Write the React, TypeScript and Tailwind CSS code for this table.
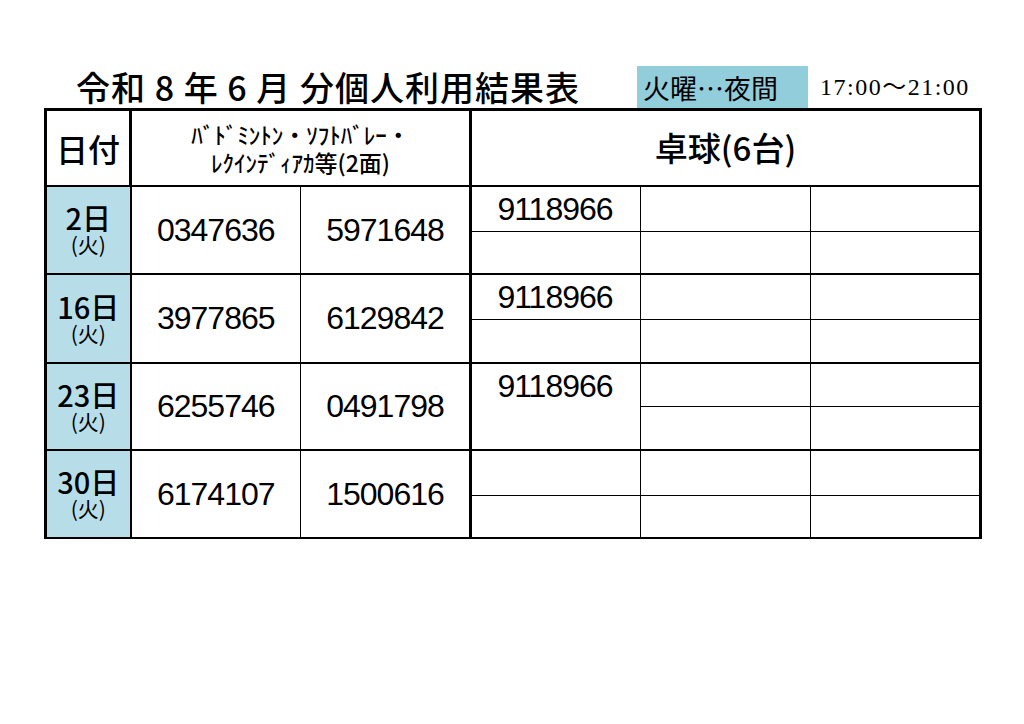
import React from "react";

type Row = {
  day: string;
  a: string;
  b: string;
  tt: string;
  merged: boolean;
};

const ROWS: Row[] = [
  { day: "2", a: "0347636", b: "5971648", tt: "9118966", merged: false },
  { day: "16", a: "3977865", b: "6129842", tt: "9118966", merged: false },
  { day: "23", a: "6255746", b: "0491798", tt: "9118966", merged: true },
  { day: "30", a: "6174107", b: "1500616", tt: "", merged: false },
];

const gothic = "font-['Noto_Sans_CJK_JP',sans-serif]";
const num = "font-['Liberation_Sans',Arial,sans-serif] text-[32px] tracking-[-1px] leading-none text-black";

export default function App() {
  return (
    <div className={`w-[1024px] h-[724px] bg-white pt-[66px] pl-[44px] ${gothic} text-black`}>
      <div className="flex items-stretch h-[42px]">
        <div className="w-[593px] pl-[32px] flex items-center">
          <span className="text-[34px] font-medium leading-none tracking-[1px]">
            令和 8 年 6 月 分個人利用結果表
          </span>
        </div>
        <div className="w-[171px] bg-[#92CDDC] flex items-center pl-[6px]">
          <span className="text-[27px] leading-none">火曜…夜間</span>
        </div>
        <div className="flex items-center pl-[12px]">
          <span className="font-['Liberation_Serif','Noto_Sans_CJK_JP',serif] text-[24px] leading-none tracking-[1.5px]">
            17:00～21:00
          </span>
        </div>
      </div>

      <table className="border-collapse table-fixed w-[935px]">
        <colgroup>
          <col className="w-[85px]" />
          <col className="w-[170px]" />
          <col className="w-[170px]" />
          <col className="w-[170px]" />
          <col className="w-[170px]" />
          <col className="w-[170px]" />
        </colgroup>
        <thead>
          <tr>
            <th className="h-[76px] border-[3px] border-r-2 border-b-2 border-black font-medium text-[32px] leading-none">
              日付
            </th>
            <th
              colSpan={2}
              className="border-[3px] border-b-2 border-black font-medium text-[23px] leading-[28px]"
            >
              <div>ﾊﾞﾄﾞﾐﾝﾄﾝ・ｿﾌﾄﾊﾞﾚｰ・</div>
              <div>ﾚｸｲﾝﾃﾞｨｱｶ等(2面)</div>
            </th>
            <th colSpan={3} className="border-[3px] border-b-2 border-black font-medium text-[33px] leading-none">
              卓球(6台)
            </th>
          </tr>
        </thead>
        <tbody>
          {ROWS.map((r) => (
            <React.Fragment key={r.day}>
              <tr>
                <td
                  rowSpan={2}
                  className="border-l-[3px] border-r-2 border-t-2 border-b-2 border-black bg-[#B7DEE8] text-center align-middle"
                >
                  <div className="text-[29px] font-medium leading-[30px]">{r.day}日</div>
                  <div className="text-[21px] leading-[25px]">(火)</div>
                </td>
                <td rowSpan={2} className="border border-t-2 border-b-2 border-black text-center">
                  <span className={num}>{r.a}</span>
                </td>
                <td rowSpan={2} className="border border-t-2 border-b-2 border-r-[3px] border-black text-center">
                  <span className={num}>{r.b}</span>
                </td>
                <td
                  rowSpan={r.merged ? 2 : 1}
                  className={`border border-t-2 border-black align-top p-0 ${r.merged ? "border-b-2" : ""}`}
                >
                  <div className="h-[44px] flex items-center justify-center pr-[2px]">
                    <span className={num}>{r.tt}</span>
                  </div>
                </td>
                <td className="border border-t-2 border-black h-[44px]" />
                <td className="border border-t-2 border-r-[3px] border-black" />
              </tr>
              <tr>
                {!r.merged && <td className="border border-b-2 border-black h-[43px]" />}
                <td className="border border-b-2 border-black h-[43px]" />
                <td className="border border-b-2 border-r-[3px] border-black" />
              </tr>
            </React.Fragment>
          ))}
        </tbody>
      </table>
    </div>
  );
}
